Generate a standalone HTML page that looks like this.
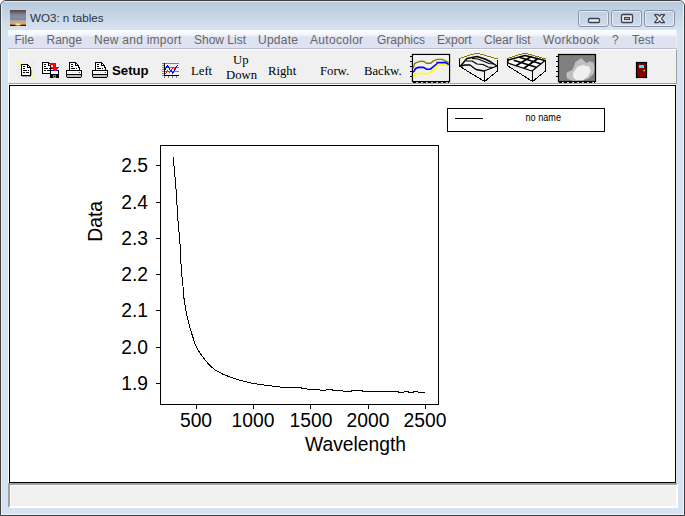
<!DOCTYPE html>
<html><head><meta charset="utf-8">
<style>
*{margin:0;padding:0;box-sizing:border-box}
html,body{width:685px;height:516px;overflow:hidden;background:#fff}
body{position:relative;font-family:"Liberation Sans",sans-serif}
.a{position:absolute}
#win{left:0;top:0;width:685px;height:516px;background:#d6e3f1;border:1px solid #3e3e3e;border-radius:6px 6px 0 0;overflow:hidden}
#inner{left:0;top:0;width:683px;height:514px;border:1px solid #eef3f9;border-top-color:#e4ebf3;border-radius:5px 5px 0 0}
#title{left:1px;top:1px;width:681px;height:28px;background:linear-gradient(#b9cadc,#d6e3f1)}
#ttext{left:30px;top:11px;font-size:11.6px;color:#283242;white-space:nowrap}
.wb{top:10px;width:31px;height:17px;border:1px solid #8793a9;border-radius:3px;background:linear-gradient(#c0cfe1,#d0dcea);box-shadow:inset 0 0 0 1px #e6ecf5}
#menu{left:8px;top:30px;width:669px;height:19px;background:linear-gradient(#fcfdfe 0,#f3f5fa 5px,#dfe3f1 7px,#dfe3f1 18px);border-bottom:1px solid #b6bccc;border-right:1px solid #eceef8}
.mi{top:33px;font-size:12px;color:#666;white-space:nowrap}
#tb{left:8px;top:49px;width:669px;height:35px;background:#f0f0f0;border-top:1px solid #fff;border-left:1px solid #fff;border-right:1px solid #a0a0a0;border-bottom:1px solid #a0a0a0}
#cl{left:8px;top:84px;width:669px;height:399px;background:#fff;border-right:1px solid #e3e3e3}
#client{left:9px;top:85px;width:667px;height:398px;background:#fff;border:1px solid #000}
#status{left:8px;top:483px;width:670px;height:25px;background:#f0f0f0;border-top:2px solid #a0a0a0;border-left:2px solid #a0a0a0;border-right:2px solid #fff;border-bottom:2px solid #fff;box-shadow:inset 1px 1px 0 #fafafa}
.ser{font-family:"Liberation Serif",serif;font-size:12.7px;color:#000;white-space:nowrap}
svg{position:absolute;left:0;top:0}
</style></head><body>
<div id="win" class="a">
<div id="inner" class="a"></div>
<div id="title" class="a"></div>
</div>
<!-- title icon -->
<div class="a" style="left:10px;top:10px;width:16px;height:16px;background:radial-gradient(ellipse 4px 1.8px at 8px 14.3px,#fff8b0 0,#f8c050 55%,rgba(240,160,64,0) 100%),linear-gradient(#5a4538 0,#6c6468 14%,#7888a0 30%,#8290a8 48%,#8c7c80 58%,#a8a4a8 66%,#c8a888 78%,#e8a048 86%,#c08040 90%,#2a1a0c 94%,#1a1008 100%)"></div>
<div id="ttext" class="a">WO3: n tables</div>
<div class="a wb" style="left:578px"></div>
<div class="a wb" style="left:611px"></div>
<div class="a wb" style="left:644px"></div>
<svg width="685" height="40" viewBox="0 0 685 40">
 <rect x="588.5" y="18.5" width="11" height="4" rx="1.2" fill="#ececec" stroke="#3a4150" stroke-width="1.3"/>
 <rect x="621.5" y="14.5" width="11" height="8" rx="1.2" fill="#ececec" stroke="#3a4150" stroke-width="1.3"/>
 <rect x="624.5" y="17.5" width="5" height="2" fill="#b8c4d4" stroke="#3a4150" stroke-width="1.1"/>
 <path d="M654.6,14.6 L658.2,14.6 L659.6,16.4 L661,14.6 L664.6,14.6 L661.4,18.6 L664.6,22.6 L661,22.6 L659.6,20.8 L658.2,22.6 L654.6,22.6 L657.8,18.6 Z" fill="#f4f4f4" stroke="#3a4150" stroke-width="1.2" stroke-linejoin="round"/>
</svg>

<div id="menu" class="a"></div>
<div class="a mi" style="left:14.5px">File</div>
<div class="a mi" style="left:46.5px">Range</div>
<div class="a mi" style="left:94px;letter-spacing:0.25px">New and import</div>
<div class="a mi" style="left:194px">Show List</div>
<div class="a mi" style="left:258px;letter-spacing:0.25px">Update</div>
<div class="a mi" style="left:310px;letter-spacing:0.3px">Autocolor</div>
<div class="a mi" style="left:377px">Graphics</div>
<div class="a mi" style="left:437px">Export</div>
<div class="a mi" style="left:484px">Clear list</div>
<div class="a mi" style="left:543px;letter-spacing:0.35px">Workbook</div>
<div class="a mi" style="left:612px">?</div>
<div class="a mi" style="left:632px">Test</div>

<div id="tb" class="a"></div>
<div class="a" style="left:112px;top:62.5px;font-weight:bold;font-size:13.2px;white-space:nowrap">Setup</div>
<div class="a ser" style="left:191px;top:64px">Left</div>
<div class="a ser" style="left:233px;top:53px">Up</div>
<div class="a ser" style="left:226px;top:68px">Down</div>
<div class="a ser" style="left:268px;top:64px">Right</div>
<div class="a ser" style="left:320px;top:64px">Forw.</div>
<div class="a ser" style="left:364px;top:64px">Backw.</div>

<!-- toolbar icons -->
<svg width="685" height="90" viewBox="0 0 685 90">
 <g shape-rendering="crispEdges">
<rect x="18" y="62" width="1" height="1" fill="#ffff00"/>
<rect x="25" y="62" width="1" height="1" fill="#ffff00"/>
<rect x="33" y="62" width="1" height="1" fill="#ffff00"/>
<rect x="19" y="63" width="1" height="1" fill="#ffff00"/>
<rect x="25" y="63" width="1" height="1" fill="#ffff00"/>
<rect x="32" y="63" width="1" height="1" fill="#ffff00"/>
<rect x="20" y="64" width="1" height="1" fill="#ffff00"/>
<rect x="21" y="64" width="7" height="1" fill="#000000"/>
<rect x="31" y="64" width="1" height="1" fill="#ffff00"/>
<rect x="21" y="65" width="1" height="1" fill="#000000"/>
<rect x="22" y="65" width="5" height="1" fill="#ffffff"/>
<rect x="27" y="65" width="2" height="1" fill="#000000"/>
<rect x="30" y="65" width="1" height="1" fill="#ffff00"/>
<rect x="21" y="66" width="1" height="1" fill="#000000"/>
<rect x="22" y="66" width="1" height="1" fill="#ffffff"/>
<rect x="23" y="66" width="2" height="1" fill="#000000"/>
<rect x="25" y="66" width="2" height="1" fill="#ffffff"/>
<rect x="27" y="66" width="1" height="1" fill="#000000"/>
<rect x="28" y="66" width="1" height="1" fill="#ffffff"/>
<rect x="29" y="66" width="1" height="1" fill="#000000"/>
<rect x="21" y="67" width="1" height="1" fill="#000000"/>
<rect x="22" y="67" width="5" height="1" fill="#ffffff"/>
<rect x="27" y="67" width="4" height="1" fill="#000000"/>
<rect x="21" y="68" width="1" height="1" fill="#000000"/>
<rect x="22" y="68" width="1" height="1" fill="#ffffff"/>
<rect x="23" y="68" width="2" height="1" fill="#000000"/>
<rect x="25" y="68" width="5" height="1" fill="#ffffff"/>
<rect x="30" y="68" width="1" height="1" fill="#000000"/>
<rect x="18" y="69" width="3" height="1" fill="#ffff00"/>
<rect x="21" y="69" width="1" height="1" fill="#000000"/>
<rect x="22" y="69" width="8" height="1" fill="#ffffff"/>
<rect x="30" y="69" width="1" height="1" fill="#000000"/>
<rect x="31" y="69" width="3" height="1" fill="#ffff00"/>
<rect x="21" y="70" width="1" height="1" fill="#000000"/>
<rect x="22" y="70" width="1" height="1" fill="#ffffff"/>
<rect x="23" y="70" width="4" height="1" fill="#000000"/>
<rect x="27" y="70" width="1" height="1" fill="#ffffff"/>
<rect x="28" y="70" width="1" height="1" fill="#000000"/>
<rect x="29" y="70" width="1" height="1" fill="#ffffff"/>
<rect x="30" y="70" width="1" height="1" fill="#000000"/>
<rect x="31" y="70" width="1" height="1" fill="#a0a0a0"/>
<rect x="21" y="71" width="1" height="1" fill="#000000"/>
<rect x="22" y="71" width="8" height="1" fill="#ffffff"/>
<rect x="30" y="71" width="1" height="1" fill="#000000"/>
<rect x="31" y="71" width="1" height="1" fill="#a0a0a0"/>
<rect x="21" y="72" width="1" height="1" fill="#000000"/>
<rect x="22" y="72" width="1" height="1" fill="#ffffff"/>
<rect x="23" y="72" width="2" height="1" fill="#000000"/>
<rect x="25" y="72" width="1" height="1" fill="#ffffff"/>
<rect x="26" y="72" width="3" height="1" fill="#000000"/>
<rect x="29" y="72" width="1" height="1" fill="#ffffff"/>
<rect x="30" y="72" width="1" height="1" fill="#000000"/>
<rect x="31" y="72" width="1" height="1" fill="#a0a0a0"/>
<rect x="21" y="73" width="1" height="1" fill="#000000"/>
<rect x="22" y="73" width="8" height="1" fill="#ffffff"/>
<rect x="30" y="73" width="1" height="1" fill="#000000"/>
<rect x="31" y="73" width="1" height="1" fill="#a0a0a0"/>
<rect x="21" y="74" width="1" height="1" fill="#000000"/>
<rect x="22" y="74" width="8" height="1" fill="#ffffff"/>
<rect x="30" y="74" width="1" height="1" fill="#000000"/>
<rect x="31" y="74" width="1" height="1" fill="#a0a0a0"/>
<rect x="20" y="75" width="1" height="1" fill="#ffff00"/>
<rect x="21" y="75" width="10" height="1" fill="#000000"/>
<rect x="31" y="75" width="1" height="1" fill="#ffff00"/>
<rect x="19" y="76" width="1" height="1" fill="#ffff00"/>
<rect x="22" y="76" width="9" height="1" fill="#a0a0a0"/>
<rect x="32" y="76" width="1" height="1" fill="#ffff00"/>
<rect x="18" y="77" width="1" height="1" fill="#ffff00"/>
<rect x="25" y="77" width="2" height="1" fill="#ffff00"/>
<rect x="33" y="77" width="1" height="1" fill="#ffff00"/>
<rect x="42" y="62" width="7" height="1" fill="#000000"/>
<rect x="42" y="63" width="1" height="1" fill="#000000"/>
<rect x="43" y="63" width="5" height="1" fill="#ffffff"/>
<rect x="48" y="63" width="2" height="1" fill="#000000"/>
<rect x="50" y="63" width="6" height="1" fill="#ff0000"/>
<rect x="42" y="64" width="1" height="1" fill="#000000"/>
<rect x="43" y="64" width="1" height="1" fill="#ffffff"/>
<rect x="44" y="64" width="2" height="1" fill="#000000"/>
<rect x="46" y="64" width="2" height="1" fill="#ffffff"/>
<rect x="48" y="64" width="1" height="1" fill="#000000"/>
<rect x="49" y="64" width="1" height="1" fill="#ffffff"/>
<rect x="50" y="64" width="6" height="1" fill="#ff0000"/>
<rect x="42" y="65" width="1" height="1" fill="#000000"/>
<rect x="43" y="65" width="5" height="1" fill="#ffffff"/>
<rect x="48" y="65" width="3" height="1" fill="#000000"/>
<rect x="53" y="65" width="3" height="1" fill="#ff0000"/>
<rect x="42" y="66" width="1" height="1" fill="#000000"/>
<rect x="43" y="66" width="1" height="1" fill="#ffffff"/>
<rect x="44" y="66" width="2" height="1" fill="#000000"/>
<rect x="46" y="66" width="4" height="1" fill="#ffffff"/>
<rect x="50" y="66" width="1" height="1" fill="#000000"/>
<rect x="53" y="66" width="3" height="1" fill="#ff0000"/>
<rect x="42" y="67" width="1" height="1" fill="#000000"/>
<rect x="43" y="67" width="7" height="1" fill="#ffffff"/>
<rect x="50" y="67" width="1" height="1" fill="#000000"/>
<rect x="51" y="67" width="8" height="1" fill="#ff0000"/>
<rect x="42" y="68" width="1" height="1" fill="#000000"/>
<rect x="43" y="68" width="1" height="1" fill="#ffffff"/>
<rect x="44" y="68" width="4" height="1" fill="#000000"/>
<rect x="48" y="68" width="1" height="1" fill="#ffffff"/>
<rect x="49" y="68" width="3" height="1" fill="#000000"/>
<rect x="52" y="68" width="6" height="1" fill="#ff0000"/>
<rect x="42" y="69" width="1" height="1" fill="#000000"/>
<rect x="43" y="69" width="7" height="1" fill="#ffffff"/>
<rect x="50" y="69" width="1" height="1" fill="#000000"/>
<rect x="53" y="69" width="4" height="1" fill="#ff0000"/>
<rect x="42" y="70" width="1" height="1" fill="#000000"/>
<rect x="43" y="70" width="1" height="1" fill="#ffffff"/>
<rect x="44" y="70" width="2" height="1" fill="#000000"/>
<rect x="46" y="70" width="1" height="1" fill="#ffffff"/>
<rect x="47" y="70" width="4" height="1" fill="#000000"/>
<rect x="51" y="70" width="3" height="1" fill="#0000ff"/>
<rect x="54" y="70" width="2" height="1" fill="#ff0000"/>
<rect x="56" y="70" width="2" height="1" fill="#0000ff"/>
<rect x="58" y="70" width="1" height="1" fill="#000000"/>
<rect x="42" y="71" width="1" height="1" fill="#000000"/>
<rect x="43" y="71" width="7" height="1" fill="#ffffff"/>
<rect x="50" y="71" width="1" height="1" fill="#000000"/>
<rect x="51" y="71" width="7" height="1" fill="#ffffff"/>
<rect x="58" y="71" width="1" height="1" fill="#000000"/>
<rect x="42" y="72" width="1" height="1" fill="#000000"/>
<rect x="43" y="72" width="7" height="1" fill="#ffffff"/>
<rect x="50" y="72" width="1" height="1" fill="#000000"/>
<rect x="51" y="72" width="7" height="1" fill="#ffffff"/>
<rect x="58" y="72" width="1" height="1" fill="#000000"/>
<rect x="42" y="73" width="9" height="1" fill="#000000"/>
<rect x="51" y="73" width="7" height="1" fill="#ffffff"/>
<rect x="58" y="73" width="1" height="1" fill="#000000"/>
<rect x="50" y="74" width="9" height="1" fill="#000000"/>
<rect x="50" y="75" width="3" height="1" fill="#000000"/>
<rect x="53" y="75" width="3" height="1" fill="#808080"/>
<rect x="56" y="75" width="3" height="1" fill="#000000"/>
<rect x="50" y="76" width="3" height="1" fill="#000000"/>
<rect x="53" y="76" width="1" height="1" fill="#808080"/>
<rect x="54" y="76" width="1" height="1" fill="#000000"/>
<rect x="55" y="76" width="1" height="1" fill="#808080"/>
<rect x="56" y="76" width="3" height="1" fill="#000000"/>
<rect x="50" y="77" width="3" height="1" fill="#000000"/>
<rect x="53" y="77" width="3" height="1" fill="#808080"/>
<rect x="56" y="77" width="3" height="1" fill="#000000"/>
<rect x="69" y="62" width="7" height="1" fill="#000000"/>
<rect x="69" y="63" width="1" height="1" fill="#000000"/>
<rect x="70" y="63" width="5" height="1" fill="#ffffff"/>
<rect x="75" y="63" width="2" height="1" fill="#000000"/>
<rect x="69" y="64" width="1" height="1" fill="#000000"/>
<rect x="70" y="64" width="1" height="1" fill="#ffffff"/>
<rect x="71" y="64" width="2" height="1" fill="#000000"/>
<rect x="73" y="64" width="2" height="1" fill="#ffffff"/>
<rect x="75" y="64" width="1" height="1" fill="#000000"/>
<rect x="76" y="64" width="1" height="1" fill="#ffffff"/>
<rect x="77" y="64" width="1" height="1" fill="#000000"/>
<rect x="69" y="65" width="1" height="1" fill="#000000"/>
<rect x="70" y="65" width="5" height="1" fill="#ffffff"/>
<rect x="75" y="65" width="4" height="1" fill="#000000"/>
<rect x="69" y="66" width="1" height="1" fill="#000000"/>
<rect x="70" y="66" width="1" height="1" fill="#ffffff"/>
<rect x="71" y="66" width="2" height="1" fill="#000000"/>
<rect x="73" y="66" width="5" height="1" fill="#ffffff"/>
<rect x="78" y="66" width="1" height="1" fill="#000000"/>
<rect x="69" y="67" width="1" height="1" fill="#000000"/>
<rect x="70" y="67" width="8" height="1" fill="#ffffff"/>
<rect x="78" y="67" width="2" height="1" fill="#000000"/>
<rect x="69" y="68" width="1" height="1" fill="#000000"/>
<rect x="70" y="68" width="1" height="1" fill="#ffffff"/>
<rect x="71" y="68" width="4" height="1" fill="#000000"/>
<rect x="75" y="68" width="1" height="1" fill="#ffffff"/>
<rect x="76" y="68" width="1" height="1" fill="#000000"/>
<rect x="77" y="68" width="2" height="1" fill="#ffffff"/>
<rect x="79" y="68" width="1" height="1" fill="#000000"/>
<rect x="69" y="69" width="1" height="1" fill="#000000"/>
<rect x="70" y="69" width="9" height="1" fill="#ffffff"/>
<rect x="79" y="69" width="1" height="1" fill="#000000"/>
<rect x="66" y="70" width="16" height="1" fill="#000000"/>
<rect x="66" y="71" width="1" height="1" fill="#000000"/>
<rect x="67" y="71" width="14" height="1" fill="#ffffff"/>
<rect x="81" y="71" width="1" height="1" fill="#000000"/>
<rect x="66" y="72" width="1" height="1" fill="#000000"/>
<rect x="67" y="72" width="1" height="1" fill="#ffffff"/>
<rect x="68" y="72" width="1" height="1" fill="#d8d8d8"/>
<rect x="69" y="72" width="1" height="1" fill="#ffffff"/>
<rect x="70" y="72" width="1" height="1" fill="#d8d8d8"/>
<rect x="71" y="72" width="1" height="1" fill="#ffffff"/>
<rect x="72" y="72" width="1" height="1" fill="#d8d8d8"/>
<rect x="73" y="72" width="1" height="1" fill="#ffffff"/>
<rect x="74" y="72" width="1" height="1" fill="#d8d8d8"/>
<rect x="75" y="72" width="1" height="1" fill="#ffffff"/>
<rect x="76" y="72" width="1" height="1" fill="#d8d8d8"/>
<rect x="77" y="72" width="1" height="1" fill="#ffffff"/>
<rect x="78" y="72" width="1" height="1" fill="#d8d8d8"/>
<rect x="79" y="72" width="1" height="1" fill="#ff0000"/>
<rect x="80" y="72" width="1" height="1" fill="#ffffff"/>
<rect x="81" y="72" width="1" height="1" fill="#000000"/>
<rect x="66" y="73" width="1" height="1" fill="#000000"/>
<rect x="67" y="73" width="14" height="1" fill="#ffffff"/>
<rect x="81" y="73" width="1" height="1" fill="#000000"/>
<rect x="66" y="74" width="16" height="1" fill="#000000"/>
<rect x="66" y="75" width="1" height="1" fill="#000000"/>
<rect x="67" y="75" width="14" height="1" fill="#c0c0c0"/>
<rect x="81" y="75" width="1" height="1" fill="#000000"/>
<rect x="66" y="76" width="1" height="1" fill="#000000"/>
<rect x="67" y="76" width="14" height="1" fill="#c0c0c0"/>
<rect x="81" y="76" width="1" height="1" fill="#000000"/>
<rect x="67" y="77" width="14" height="1" fill="#000000"/>
<rect x="95" y="62" width="7" height="1" fill="#000000"/>
<rect x="95" y="63" width="1" height="1" fill="#000000"/>
<rect x="96" y="63" width="5" height="1" fill="#ffffff"/>
<rect x="101" y="63" width="2" height="1" fill="#000000"/>
<rect x="95" y="64" width="1" height="1" fill="#000000"/>
<rect x="96" y="64" width="1" height="1" fill="#ffffff"/>
<rect x="97" y="64" width="2" height="1" fill="#000000"/>
<rect x="99" y="64" width="2" height="1" fill="#ffffff"/>
<rect x="101" y="64" width="1" height="1" fill="#000000"/>
<rect x="102" y="64" width="1" height="1" fill="#ffffff"/>
<rect x="103" y="64" width="1" height="1" fill="#000000"/>
<rect x="95" y="65" width="1" height="1" fill="#000000"/>
<rect x="96" y="65" width="5" height="1" fill="#ffffff"/>
<rect x="101" y="65" width="4" height="1" fill="#000000"/>
<rect x="95" y="66" width="1" height="1" fill="#000000"/>
<rect x="96" y="66" width="1" height="1" fill="#ffffff"/>
<rect x="97" y="66" width="2" height="1" fill="#000000"/>
<rect x="99" y="66" width="5" height="1" fill="#ffffff"/>
<rect x="104" y="66" width="1" height="1" fill="#000000"/>
<rect x="95" y="67" width="1" height="1" fill="#000000"/>
<rect x="96" y="67" width="8" height="1" fill="#ffffff"/>
<rect x="104" y="67" width="2" height="1" fill="#000000"/>
<rect x="95" y="68" width="1" height="1" fill="#000000"/>
<rect x="96" y="68" width="1" height="1" fill="#ffffff"/>
<rect x="97" y="68" width="4" height="1" fill="#000000"/>
<rect x="101" y="68" width="1" height="1" fill="#ffffff"/>
<rect x="102" y="68" width="1" height="1" fill="#000000"/>
<rect x="103" y="68" width="2" height="1" fill="#ffffff"/>
<rect x="105" y="68" width="1" height="1" fill="#000000"/>
<rect x="95" y="69" width="1" height="1" fill="#000000"/>
<rect x="96" y="69" width="9" height="1" fill="#ffffff"/>
<rect x="105" y="69" width="1" height="1" fill="#000000"/>
<rect x="92" y="70" width="16" height="1" fill="#000000"/>
<rect x="92" y="71" width="1" height="1" fill="#000000"/>
<rect x="93" y="71" width="14" height="1" fill="#ffffff"/>
<rect x="107" y="71" width="1" height="1" fill="#000000"/>
<rect x="92" y="72" width="1" height="1" fill="#000000"/>
<rect x="93" y="72" width="1" height="1" fill="#ffffff"/>
<rect x="94" y="72" width="1" height="1" fill="#d8d8d8"/>
<rect x="95" y="72" width="1" height="1" fill="#ffffff"/>
<rect x="96" y="72" width="1" height="1" fill="#d8d8d8"/>
<rect x="97" y="72" width="1" height="1" fill="#ffffff"/>
<rect x="98" y="72" width="1" height="1" fill="#d8d8d8"/>
<rect x="99" y="72" width="1" height="1" fill="#ffffff"/>
<rect x="100" y="72" width="1" height="1" fill="#d8d8d8"/>
<rect x="101" y="72" width="1" height="1" fill="#ffffff"/>
<rect x="102" y="72" width="1" height="1" fill="#d8d8d8"/>
<rect x="103" y="72" width="1" height="1" fill="#ffffff"/>
<rect x="104" y="72" width="1" height="1" fill="#d8d8d8"/>
<rect x="105" y="72" width="1" height="1" fill="#ff0000"/>
<rect x="106" y="72" width="1" height="1" fill="#ffffff"/>
<rect x="107" y="72" width="1" height="1" fill="#000000"/>
<rect x="92" y="73" width="1" height="1" fill="#000000"/>
<rect x="93" y="73" width="14" height="1" fill="#ffffff"/>
<rect x="107" y="73" width="1" height="1" fill="#000000"/>
<rect x="92" y="74" width="16" height="1" fill="#000000"/>
<rect x="92" y="75" width="1" height="1" fill="#000000"/>
<rect x="93" y="75" width="14" height="1" fill="#c0c0c0"/>
<rect x="107" y="75" width="1" height="1" fill="#000000"/>
<rect x="92" y="76" width="1" height="1" fill="#000000"/>
<rect x="93" y="76" width="14" height="1" fill="#c0c0c0"/>
<rect x="107" y="76" width="1" height="1" fill="#000000"/>
<rect x="93" y="77" width="14" height="1" fill="#000000"/>
<rect x="162" y="63" width="2" height="1" fill="#808080"/>
<rect x="164" y="63" width="1" height="1" fill="#000000"/>
<rect x="165" y="63" width="14" height="1" fill="#808080"/>
<rect x="164" y="64" width="1" height="1" fill="#000000"/>
<rect x="162" y="65" width="2" height="1" fill="#808080"/>
<rect x="164" y="65" width="1" height="1" fill="#000000"/>
<rect x="167" y="65" width="1" height="1" fill="#0000ff"/>
<rect x="177" y="65" width="1" height="1" fill="#0000ff"/>
<rect x="164" y="66" width="1" height="1" fill="#000000"/>
<rect x="166" y="66" width="3" height="1" fill="#0000ff"/>
<rect x="176" y="66" width="1" height="1" fill="#0000ff"/>
<rect x="162" y="67" width="2" height="1" fill="#808080"/>
<rect x="164" y="67" width="1" height="1" fill="#000000"/>
<rect x="165" y="67" width="1" height="1" fill="#808080"/>
<rect x="166" y="67" width="1" height="1" fill="#0000ff"/>
<rect x="167" y="67" width="1" height="1" fill="#808080"/>
<rect x="168" y="67" width="1" height="1" fill="#0000ff"/>
<rect x="169" y="67" width="4" height="1" fill="#808080"/>
<rect x="173" y="67" width="1" height="1" fill="#ff0000"/>
<rect x="174" y="67" width="1" height="1" fill="#808080"/>
<rect x="175" y="67" width="1" height="1" fill="#0000ff"/>
<rect x="176" y="67" width="1" height="1" fill="#ff0000"/>
<rect x="177" y="67" width="2" height="1" fill="#808080"/>
<rect x="164" y="68" width="1" height="1" fill="#000000"/>
<rect x="165" y="68" width="1" height="1" fill="#0000ff"/>
<rect x="169" y="68" width="1" height="1" fill="#0000ff"/>
<rect x="172" y="68" width="1" height="1" fill="#ff0000"/>
<rect x="174" y="68" width="1" height="1" fill="#ff0000"/>
<rect x="175" y="68" width="1" height="1" fill="#0000ff"/>
<rect x="162" y="69" width="2" height="1" fill="#808080"/>
<rect x="164" y="69" width="1" height="1" fill="#000000"/>
<rect x="165" y="69" width="1" height="1" fill="#0000ff"/>
<rect x="169" y="69" width="1" height="1" fill="#0000ff"/>
<rect x="171" y="69" width="1" height="1" fill="#ff0000"/>
<rect x="174" y="69" width="1" height="1" fill="#0000ff"/>
<rect x="175" y="69" width="1" height="1" fill="#ff0000"/>
<rect x="164" y="70" width="1" height="1" fill="#000000"/>
<rect x="167" y="70" width="1" height="1" fill="#ff0000"/>
<rect x="170" y="70" width="1" height="1" fill="#0000ff"/>
<rect x="171" y="70" width="1" height="1" fill="#ff0000"/>
<rect x="174" y="70" width="1" height="1" fill="#0000ff"/>
<rect x="162" y="71" width="2" height="1" fill="#808080"/>
<rect x="164" y="71" width="1" height="1" fill="#000000"/>
<rect x="165" y="71" width="1" height="1" fill="#808080"/>
<rect x="166" y="71" width="1" height="1" fill="#ff0000"/>
<rect x="167" y="71" width="1" height="1" fill="#808080"/>
<rect x="168" y="71" width="1" height="1" fill="#ff0000"/>
<rect x="169" y="71" width="1" height="1" fill="#808080"/>
<rect x="170" y="71" width="1" height="1" fill="#ff0000"/>
<rect x="171" y="71" width="1" height="1" fill="#0000ff"/>
<rect x="172" y="71" width="1" height="1" fill="#808080"/>
<rect x="173" y="71" width="1" height="1" fill="#0000ff"/>
<rect x="174" y="71" width="5" height="1" fill="#808080"/>
<rect x="164" y="72" width="1" height="1" fill="#000000"/>
<rect x="166" y="72" width="1" height="1" fill="#ff0000"/>
<rect x="169" y="72" width="1" height="1" fill="#ff0000"/>
<rect x="172" y="72" width="2" height="1" fill="#0000ff"/>
<rect x="162" y="73" width="2" height="1" fill="#808080"/>
<rect x="164" y="73" width="1" height="1" fill="#000000"/>
<rect x="165" y="73" width="1" height="1" fill="#ff0000"/>
<rect x="172" y="73" width="1" height="1" fill="#0000ff"/>
<rect x="164" y="74" width="1" height="1" fill="#000000"/>
<rect x="162" y="75" width="2" height="1" fill="#808080"/>
<rect x="164" y="75" width="15" height="1" fill="#000000"/>
<rect x="164" y="76" width="1" height="1" fill="#808080"/>
<rect x="168" y="76" width="1" height="1" fill="#808080"/>
<rect x="172" y="76" width="1" height="1" fill="#808080"/>
<rect x="176" y="76" width="1" height="1" fill="#808080"/>
<rect x="164" y="77" width="1" height="1" fill="#808080"/>
<rect x="168" y="77" width="1" height="1" fill="#808080"/>
<rect x="172" y="77" width="1" height="1" fill="#808080"/>
<rect x="176" y="77" width="1" height="1" fill="#808080"/>
 </g>
 <!-- graph icon 1 -->
 <rect x="412.5" y="54.5" width="37" height="27" fill="#f0f0f0" stroke="#000" stroke-width="1.3"/>
 <rect x="413.8" y="55.8" width="34.4" height="24.4" fill="none" stroke="#fff" stroke-width="0.8"/>
 <g stroke="#000" stroke-width="1" shape-rendering="crispEdges">
  <path d="M410,56.5 h2 M410,61.5 h2 M410,66.5 h2 M410,71.5 h2 M410,76.5 h2"/>
  <path d="M413,82.5 h36" stroke-dasharray="3 2"/>
 </g>
 <path d="M413.2,68.5 L414.6,63.6 L415.7,62.9 L417.8,62.2 L420.6,61.2 L424,61.5 L426.5,63.3 L430.7,63.3 L433.1,61.2 L437.3,59.4 L442.2,59.4 L446.7,61.5 L448.8,62.9" fill="none" stroke="#808000" stroke-width="1.4"/>
 <path d="M413.2,72.3 L415.7,68.5 L418.5,67.4 L423.4,67.4 L426.8,69.2 L430.3,69.2 L436.6,64 L437.3,62.6 L445.7,62.6 L448.8,64.7" fill="none" stroke="#0000ff" stroke-width="1.6"/>
 <path d="M413.2,77.2 L415,73.7 L428.9,73.4 L436.3,68.1 L438,65 L442.9,64.7 L448.8,66" fill="none" stroke="#ffff00" stroke-width="1.6"/>
 <!-- 3D surface icon -->
 <g fill="none" stroke-width="1" shape-rendering="crispEdges" stroke-linejoin="round">
  <path d="M459,58.5 L477,53 L497.5,59" stroke="#808000"/>
  <path d="M459.5,58.5 V66.5 M497.5,59.5 V71 M460,66.5 L484.5,81.5 L497.5,71 M484.5,71 V81" stroke="#000"/>
 </g>
 <g fill="none" stroke="#000" stroke-linejoin="round">
  <path d="M460,66.5 L467,58.5 L477,56.5 L485,59 L491,62 L497,66" stroke-width="1.5"/>
  <path d="M466,61 L472,61 L477,64 L483,64.5 L488,67 L493,67.5" stroke-width="1.2"/>
  <path d="M461,66 L465,65 L470,65 L476,69.5 L484,71 L497,66" stroke-width="1.3"/>
  <path d="M472,58.5 L478,59 L483,61 L489,63.5 L494,64" stroke-width="1.1"/>
 </g>
 <!-- 3D grid icon -->
 <g fill="none" stroke-width="1" shape-rendering="crispEdges" stroke-linejoin="round">
  <path d="M507,58.5 L525,53 L545.5,59" stroke="#808000"/>
  <path d="M507.5,58.5 V66 M545.5,59.5 V71 M508,66 L532.5,81.5 L545.5,71 M532.5,71 V81" stroke="#000"/>
 </g>
 <g fill="#fff" stroke="#000" stroke-width="1.7" stroke-linejoin="round">
  <path d="M508,60 L525,55.5 L545,60.5 L532,71 L508,63 Z" stroke-width="1.3"/>
  <path fill="none" d="M516.0,65.7 L531.7,56.3 M513.7,60.2 L536.3,67.3 M524.0,68.3 L538.3,58.2 M519.3,57.3 L540.7,63.7"/>
 </g>
 <!-- contour icon -->
 <rect x="558.5" y="54.5" width="37" height="27" fill="#808080" stroke="#000" stroke-width="1.2"/>
 <path d="M566.3,75.1 L567,72.3 L571.8,70.2 L573.9,66.7 L575.3,61.9 L578.8,59.8 L581.3,58 L583.7,60.5 L586.5,62.9 L589.6,61.2 L593.5,62.6 L594.5,67.4 L593.5,73.7 L588.6,78.6 L582.3,80.7 L572.5,80.7 L567,78.6 Z" fill="#c0c0c0"/>
 <path d="M573.2,73 L577.4,66.7 L583,65 L589.3,66.7 L590.7,70.9 L587.9,76.5 L583,80 L576,80 L573.2,77.2 Z" fill="#f0f0f0"/>
 <g stroke="#000" stroke-width="1" shape-rendering="crispEdges">
  <path d="M556,56.5 h2 M556,61.5 h2 M556,66.5 h2 M556,71.5 h2 M556,76.5 h2"/>
  <path d="M559,82.5 h36" stroke-dasharray="3 2"/>
 </g>
 <!-- door -->
 <rect x="636.5" y="62.5" width="10" height="15" fill="#800000" stroke="#000" stroke-width="1.2"/>
 <rect x="639" y="65" width="5" height="3" fill="#00ffff"/>
 <rect x="643.5" y="70" width="1.3" height="1.3" fill="#ffff00"/>
</svg>

<div id="cl" class="a"></div>
<div id="client" class="a"></div>
<div id="status" class="a"></div>

<!-- chart -->
<svg width="685" height="516" viewBox="0 0 685 516" font-family="Liberation Sans" >
 <g shape-rendering="crispEdges" stroke="#000" stroke-width="1" fill="none">
  <rect x="160.5" y="145.5" width="278" height="259"/>
  <path d="M156,165.5 h4 M156,202.5 h4 M156,238.5 h4 M156,274.5 h4 M156,310.5 h4 M156,347.5 h4 M156,383.5 h4"/>
  <path d="M196.5,405 v4 M253.5,405 v4 M310.5,405 v4 M368.5,405 v4 M425.5,405 v4"/>
  <rect x="447.5" y="108.5" width="157" height="23"/>
  <path d="M455,118.5 h28"/>
  <polyline points="173.3,156.6 174.4,170.6 175.8,185.7 176.7,199.7 177.7,217.1 179.1,233.4 180.5,249.7 180.7,260 181.9,275.5 183,286.4 183.8,297.2 185.3,306.5 186.9,315.8 189.2,325.1 191.5,332.9 193.5,339 195.1,343.9 198.2,350.2 201.4,355.2 205.8,360.9 210.8,366.5 216.5,370.9 222.8,374.1 230.3,377.2 237.9,379.7 245.5,381.6 253,383.5 257.5,384.1 265.5,385.3 274.3,386.3 283,387.3 299.9,387.7 307.9,389.2 323.2,390.2 332,389.5 333,390.4 342.8,390.4 343.4,391.6 351.2,391.6 351.9,390.4 362.1,390.4 363.3,391.6 397.9,391.6 399.3,392.6 403,392.6 404.5,391.6 408.1,391.6 408.8,392.6 412.9,392.6 413.9,391.6 417.6,391.6 419,392.6 424.9,392.6"/>
 </g>
 <g font-size="19.3" fill="#000" text-anchor="end">
  <text x="148" y="171.7">2.5</text>
  <text x="148" y="208.7">2.4</text>
  <text x="148" y="244.7">2.3</text>
  <text x="148" y="280.7">2.2</text>
  <text x="148" y="316.7">2.1</text>
  <text x="148" y="353.7">2.0</text>
  <text x="148" y="389.7">1.9</text>
 </g>
 <g font-size="19.3" fill="#000" text-anchor="middle">
  <text x="196" y="427">500</text>
  <text x="253" y="427">1000</text>
  <text x="311" y="427">1500</text>
  <text x="368" y="427">2000</text>
  <text x="425" y="427">2500</text>
  <text x="355.5" y="450.5">Wavelength</text>
  <text transform="translate(102.3,221.4) rotate(-90) scale(1,1.08)">Data</text>
 </g>
 <text x="525.5" y="121" font-size="10" fill="#000" textLength="35.5" lengthAdjust="spacingAndGlyphs">no name</text>
</svg>
</body></html>
